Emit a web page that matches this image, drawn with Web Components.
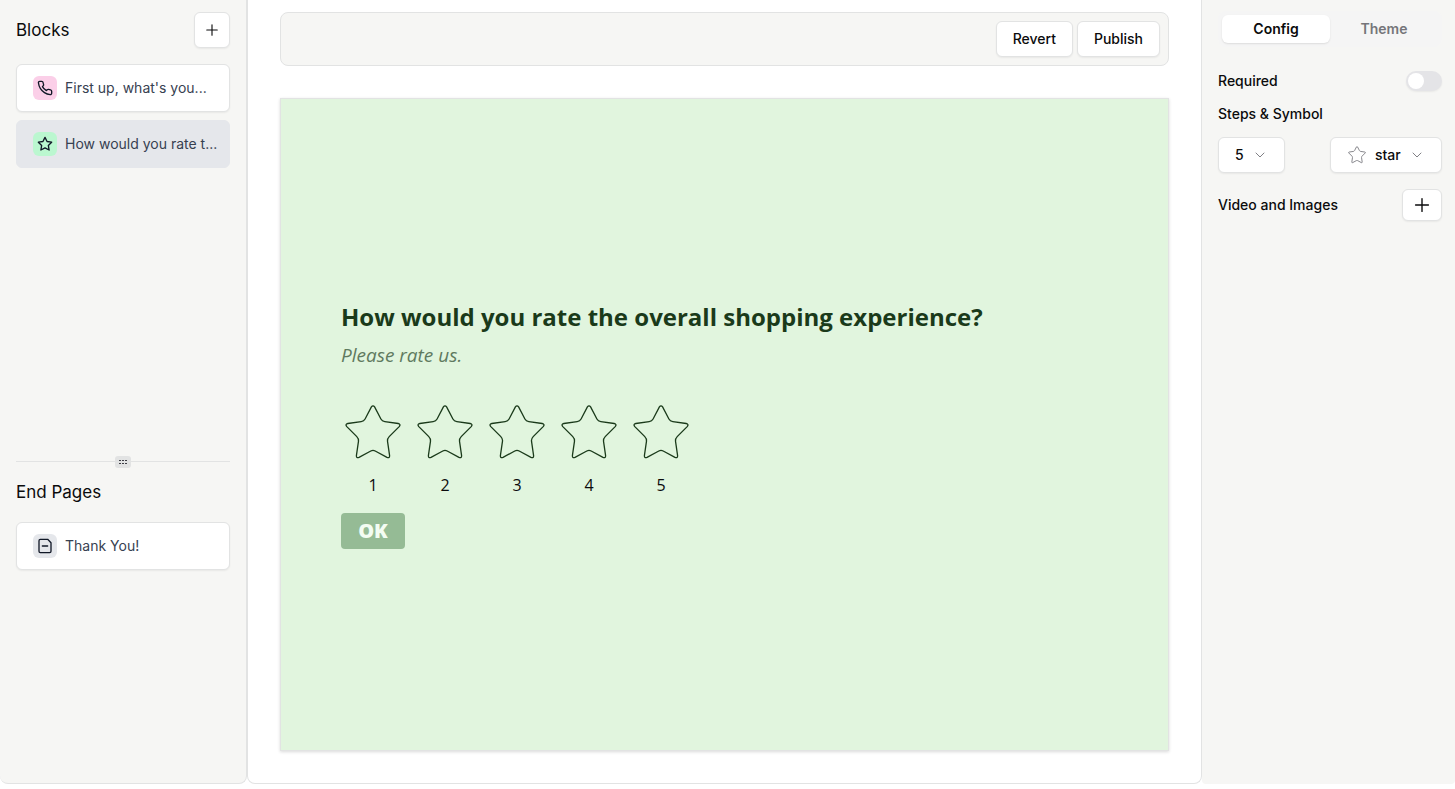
<!DOCTYPE html>
<html lang="en">
<head>
<meta charset="utf-8">
<title>Form editor</title>
<style>
  :root {
    --panel: #f6f6f4;
    --line: #e2e3e3;
    --ink: #0b0b0c;
    --muted: #75757a;
    --shadow: 0 1px 2px rgba(0, 0, 0, .06);
  }
  body {
    margin: 0;
    background: #fff;
    color: var(--ink);
    font-family: Inter, "Liberation Sans", sans-serif;
    font-size: 14px;
    line-height: 20px;
  }
</style>
</head>
<body>
<form-editor>
  <blocks-panel slot="left">
    <block-item kind="phone">First up, what's you...</block-item>
    <block-item kind="star" selected>How would you rate t...</block-item>
    <block-item slot="end" kind="page">Thank You!</block-item>
  </blocks-panel>
  <editor-toolbar>
    <ui-button>Revert</ui-button>
    <ui-button>Publish</ui-button>
  </editor-toolbar>
  <form-preview>
    <span slot="title">How would you rate the overall shopping experience?</span>
    <span slot="description">Please rate us.</span>
    <star-rating steps="5"></star-rating>
  </form-preview>
  <config-panel slot="right"></config-panel>
</form-editor>

<script>
'use strict';

const ICONS = {
  plus: '<path d="M5 12h14M12 5v14"/>',
  chevron: '<path d="m4 8 8 8 8-8"/>',
  phone: '<path d="M22 16.92v3a2 2 0 0 1-2.18 2 19.79 19.79 0 0 1-8.63-3.07 19.5 19.5 0 0 1-6-6 19.79 19.79 0 0 1-3.07-8.67A2 2 0 0 1 4.11 2h3a2 2 0 0 1 2 1.72 12.84 12.84 0 0 0 .7 2.81 2 2 0 0 1-.45 2.11L8.09 9.91a16 16 0 0 0 6 6l1.27-1.27a2 2 0 0 1 2.11-.45 12.84 12.84 0 0 0 2.81.7A2 2 0 0 1 22 16.92z"/>',
  star: '<path d="m12 2 3.09 6.26L22 9.27l-5 4.87 1.18 6.88L12 17.77l-6.18 3.25L7 14.14 2 9.27l6.91-1.01z"/>',
  page: '<path d="M5 2h11l5 5v13a2 2 0 0 1-2 2H5a2 2 0 0 1-2-2V4a2 2 0 0 1 2-2zM8 12h8"/>'
};
const icon = (name, size, stroke = 2) =>
  `<svg width="${size}" height="${size}" viewBox="0 0 24 24" fill="none" stroke="currentColor" stroke-width="${stroke}" stroke-linecap="round" stroke-linejoin="round" aria-hidden="true">${ICONS[name]}</svg>`;

// five pointed star with rounded tips and soft inner corners
const roundStar = (size, stroke) =>
  `<svg width="${size}" height="${size}" viewBox="0 0 64 64" fill="none" stroke="currentColor" stroke-width="${stroke}" stroke-linejoin="round" aria-hidden="true"><path d="M30.4 5.9Q32 3.7 33.6 5.9L39.9 18Q41.1 20.2 43.8 20.6L57.2 22.5Q60.2 23.3 58.2 25.6L48.2 35.6Q46.2 37.6 46.5 40.2L48.6 54.6Q48.8 57.5 46 56.4L34.2 50Q32 48.9 29.8 50L18 56.4Q15.2 57.5 15.4 54.6L17.5 40.2Q17.8 37.6 15.8 35.6L5.8 25.6Q3.8 23.3 6.8 22.5L20.2 20.6Q22.9 20.2 24.1 18Z"/></svg>`;

const BASE = `
  * { box-sizing: border-box; }
  :host { display: block; box-sizing: border-box; }
  svg { display: block; flex: none; }
  button, input, select { font: inherit; color: inherit; margin: 0; }
`;

class FormEditor extends HTMLElement {
  constructor() {
    super();
    this.attachShadow({ mode: "open" }).innerHTML = `<style>${BASE}
      :host {
        display: grid;
        grid-template-columns: 247px minmax(0, 1fr) 253px;
        min-height: 100vh;
        padding-bottom: 5px;
      }
      main {
        display: flex;
        flex-direction: column;
        gap: 32px;
        padding: 12px 32px 32px;
        border: 1px solid var(--line);
        border-top: 0;
        border-radius: 0 0 8px 8px;
      }
    </style>
    <slot name="left"></slot>
    <main><slot></slot></main>
    <slot name="right"></slot>`;
  }
}

class UiButton extends HTMLElement {
  constructor() {
    super();
    const label = this.getAttribute("label");
    const size = this.getAttribute("icon-size") || 18;
    this.attachShadow({ mode: "open" }).innerHTML = `<style>${BASE}
      button {
        display: flex;
        align-items: center;
        justify-content: center;
        width: 100%;
        height: 36px;
        padding: 0 16px;
        border: 1px solid var(--line);
        border-radius: 6px;
        background: #fff;
        box-shadow: var(--shadow);
        font-weight: 500;
      }
      :host([square]) { width: 36px; }
      :host([wide]) { width: 40px; }
      :host([wide]) button { height: 32px; }
      button.icon { padding: 0; }
    </style>` + (label
      ? `<button class="icon" type="button" aria-label="${label}">${icon("plus", size, 1.5)}</button>`
      : `<button type="button"><slot></slot></button>`);
  }
}

class BlockItem extends HTMLElement {
  constructor() {
    super();
    const kind = this.getAttribute("kind");
    this.attachShadow({ mode: "open" }).innerHTML = `<style>${BASE}
      button {
        display: flex;
        align-items: center;
        gap: 8px;
        width: 100%;
        height: 48px;
        padding: 0 0 0 16px;
        border: 1px solid var(--line);
        border-radius: 6px;
        background: #fff;
        color: #374151;
        white-space: nowrap;
        box-shadow: var(--shadow);
      }
      :host([selected]) button { background: #e5e7eb; border-color: #e5e7eb; box-shadow: none; }
      .icon {
        display: grid;
        place-items: center;
        flex: none;
        width: 24px;
        height: 24px;
        border-radius: 6px;
        color: #111827;
      }
      .phone { background: #fbcfe8; }
      .star { background: #bbf7d0; }
      .page { background: #e5e7eb; }
    </style>
    <button type="button"><span class="icon ${kind}">${icon(kind, 16)}</span><span><slot></slot></span></button>`;
  }
}

class BlocksPanel extends HTMLElement {
  constructor() {
    super();
    this.attachShadow({ mode: "open" }).innerHTML = `<style>${BASE}
      :host {
        display: flex;
        flex-direction: column;
        padding: 0 16px;
        background: var(--panel);
        border: solid var(--line);
        border-width: 0 1px 1px 0;
        border-radius: 0 0 8px 8px;
      }
      section { flex: 59 1 0; }
      .end { flex-grow: 41; }
      header {
        display: flex;
        align-items: center;
        justify-content: space-between;
        padding: 12px 0 16px;
      }
      .end header { padding: 18px 0; }
      h2 { margin: 0; font-size: 17px; line-height: 24px; font-weight: 400; }
      .list { display: grid; grid-template-columns: minmax(0, 1fr); gap: 8px; }
      .divider {
        display: flex;
        align-items: center;
        height: 1px;
        background: var(--line);
        justify-content: center;
      }
      .grip {
        display: grid;
        place-items: center;
        width: 16px;
        height: 12px;
        flex: none;
        border-radius: 3px;
        background: var(--line);
      }
    </style>
    <section>
      <header><h2>Blocks</h2><ui-button square label="Add block"></ui-button></header>
      <div class="list"><slot></slot></div>
    </section>
    <div class="divider" role="separator"><span class="grip">
      <svg width="8" height="4" viewBox="0 0 8 4" fill="#3f3f46"><path d="M0 0h2v1H0zM3 0h2v1H3zM6 0h2v1H6zM0 3h2v1H0zM3 3h2v1H3zM6 3h2v1H6z"/></svg>
    </span></div>
    <section class="end">
      <header><h2>End Pages</h2></header>
      <div class="list"><slot name="end"></slot></div>
    </section>`;
  }
}

class EditorToolbar extends HTMLElement {
  constructor() {
    super();
    this.attachShadow({ mode: "open" }).innerHTML = `<style>${BASE}
      :host {
        display: flex;
        justify-content: flex-end;
        gap: 4px;
        padding: 8px;
        border: 1px solid var(--line);
        border-radius: 8px;
        background: var(--panel);
      }
    </style><slot></slot>`;
  }
}

class StarRating extends HTMLElement {
  constructor() {
    super();
    const steps = Number(this.getAttribute("steps"));
    const items = Array.from({ length: steps }, (_, i) => `
      <label><input type="radio" name="rating" value="${i + 1}">${roundStar(64, 1.3)}<span>${i + 1}</span></label>`);
    this.attachShadow({ mode: "open" }).innerHTML = `<style>${BASE}
      :host { display: flex; gap: 8px; color: #1a3a1a; }
      label { display: grid; justify-items: center; gap: 8px; }
      input, svg { grid-area: 1 / 1; }
      input { width: 64px; height: 64px; opacity: 0; }
      span { color: var(--ink); font-size: 16px; line-height: 24px; }
    </style>${items.join("")}`;
  }
}

class FormPreview extends HTMLElement {
  constructor() {
    super();
    this.attachShadow({ mode: "open" }).innerHTML = `<style>${BASE}
      :host {
        display: flex;
        flex: 1;
        flex-direction: column;
        justify-content: center;
        align-items: flex-start;
        padding: 0 60px;
        border: 1px solid var(--line);
        background: #e1f5de;
        box-shadow: 0 1px 3px rgba(0, 0, 0, .15);
        font-family: "Open Sans", "Noto Sans", sans-serif;
      }
      h1 { margin: 0; color: #1a3a1a; font-size: 24px; line-height: 32px; font-weight: 700; }
      p { margin: 8px 0 32px; color: #5f7a5f; font-size: 19px; line-height: 28px; font-style: italic; }
      button {
        min-width: 64px;
        height: 36px;
        margin-top: 16px;
        padding: 0 16px;
        border: 0;
        border-radius: 4px;
        background: #95bb95;
        color: #f3fcf2;
        font-size: 20px;
        line-height: 28px;
        font-weight: 800;
      }
    </style>
    <h1><slot name="title"></slot></h1>
    <p><slot name="description"></slot></p>
    <slot></slot>
    <button type="button">OK</button>`;
  }
}

class ConfigPanel extends HTMLElement {
  constructor() {
    super();
    this.attachShadow({ mode: "open" }).innerHTML = `<style>${BASE}
      :host {
        padding: 11px 13px 16px 16px;
        background: var(--panel);
        border-radius: 0 0 4px 4px;
        font-weight: 500;
      }
      .tabs {
        display: grid;
        grid-template-columns: 1fr 1fr;
        padding: 4px;
        border-radius: 8px;
        background: #f5f5f5;
      }
      .tabs button {
        height: 28px;
        padding: 0;
        border: 0;
        border-radius: 6px;
        background: none;
        color: var(--muted);
        font-weight: 600;
      }
      .tabs [aria-selected=true] { background: #fff; color: var(--ink); box-shadow: 0 1px 2px rgba(0, 0, 0, .1); }
      .row { display: flex; align-items: center; justify-content: space-between; }
      .required { margin-top: 24px; }
      .steps { margin: 13px 0; }
      .media { margin-top: 16px; }
      .switch {
        display: flex;
        appearance: none;
        width: 36px;
        height: 20px;
        padding: 2px;
        border-radius: 10px;
        background: #e4e4e7;
        box-shadow: var(--shadow);
      }
      .switch::before { content: ""; width: 16px; height: 16px; border-radius: 8px; background: #fff; }
      .switch:checked { justify-content: flex-end; background: #18181b; }
      .select {
        display: grid;
        align-items: center;
        border: 1px solid var(--line);
        border-radius: 6px;
        background: #fff;
        box-shadow: var(--shadow);
      }
      .select > * { grid-area: 1 / 1; }
      .select svg { pointer-events: none; color: #808085; }
      .select .chev { display: flex; justify-content: flex-end; padding-right: 18px; pointer-events: none; }
      .lead { padding-left: 16px; pointer-events: none; }
      select {
        appearance: none;
        height: 34px;
        width: 100%;
        padding: 0 32px 0 16px;
        border: 0;
        border-radius: 6px;
        background: none;
      }
      .count { width: 67px; }
      .symbol { width: 112px; }
      .symbol select { padding-left: 44px; }
    </style>
    <div class="tabs" role="tablist">
      <button type="button" role="tab" aria-selected="true">Config</button>
      <button type="button" role="tab" aria-selected="false">Theme</button>
    </div>
    <div class="row required"><label for="required">Required</label><input class="switch" id="required" type="checkbox" role="switch"></div>
    <div class="steps" id="steps">Steps &amp; Symbol</div>
    <div class="row" role="group" aria-labelledby="steps">
      <div class="select count">
        <select aria-label="Steps"><option>5</option></select>
        <span class="chev">${icon("chevron", 12)}</span>
      </div>
      <div class="select symbol">
        <select aria-label="Symbol"><option>star</option></select>
        <span class="lead">${roundStar(20, 3)}</span>
        <span class="chev">${icon("chevron", 12)}</span>
      </div>
    </div>
    <div class="row media"><span>Video and Images</span><ui-button wide label="Add media" icon-size="22"></ui-button></div>`;
  }
}

customElements.define("ui-button", UiButton);
customElements.define("block-item", BlockItem);
customElements.define("blocks-panel", BlocksPanel);
customElements.define("editor-toolbar", EditorToolbar);
customElements.define("star-rating", StarRating);
customElements.define("form-preview", FormPreview);
customElements.define("config-panel", ConfigPanel);
customElements.define("form-editor", FormEditor);
</script>
</body>
</html>
